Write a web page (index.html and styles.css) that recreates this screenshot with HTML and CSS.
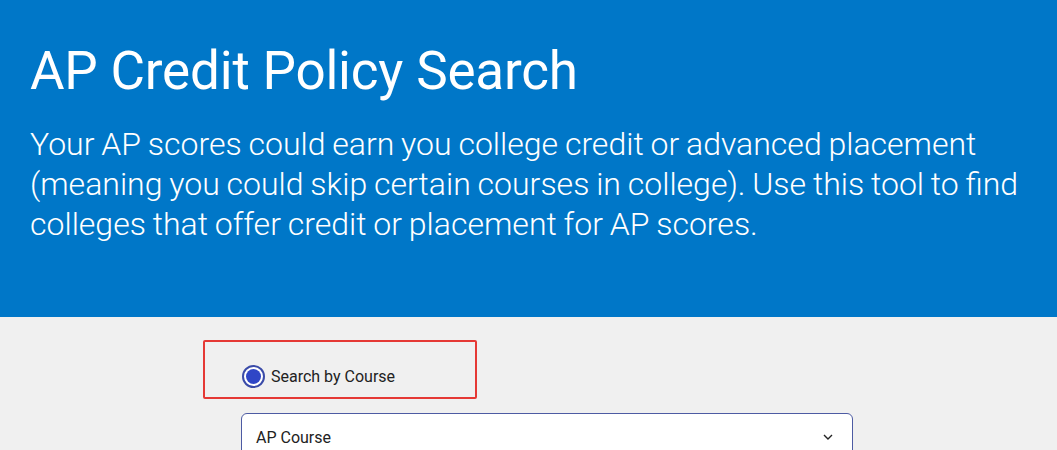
FILE: index.html
```
<!DOCTYPE html>
<html>
<head>
<meta charset="utf-8">
<link rel="stylesheet" href="styles.css">
</head>
<body>
<header class="hero">
  <h1 class="hero-title">AP Credit Policy Search</h1>
  <p class="hero-text">Your AP scores could earn you college credit or advanced placement (meaning you could skip certain courses in college). Use this tool to find colleges that offer credit or placement for AP scores.</p>
</header>
<main class="search">
  <div class="search-inner">
    <div class="highlight">
      <label class="radio-row">
        <span class="radio"><span class="radio-dot"></span></span>
        <span class="radio-label">Search by Course</span>
      </label>
    </div>
    <div class="select">
      <span class="select-text">AP Course</span>
      <svg class="chevron" width="10" height="6" viewBox="0 0 10 6"><path d="M1 1l4 4 4-4" fill="none" stroke="#222" stroke-width="1.4"/></svg>
    </div>
  </div>
</main>
</body>
</html>
```
FILE: styles.css
```
* { box-sizing: border-box; }
html, body { margin: 0; padding: 0; }
body { font-family: Roboto, "Noto Sans", sans-serif; background: #f0f0f0; height: 450px; overflow: hidden; }
.hero { background: #0077c8; color: #fff; height: 317px; padding: 40px 14px 0 30px; }
.hero-title { margin: 0; font-size: 53px; font-weight: 400; line-height: 62px; letter-spacing: -0.2px; }
.hero-text { margin: 22px 0 0 0; font-size: 32px; font-weight: 300; line-height: 40px; word-spacing: -1px; }
.search { padding: 23px 0 0 203px; }
.highlight { width: 274px; height: 59px; border: 2px solid #e53935; border-radius: 2px; padding: 23px 0 0 37px; }
.radio-row { display: flex; align-items: center; gap: 6px; }
.radio { width: 23px; height: 23px; border: 2px solid #3a4ba8; border-radius: 50%; display: flex; align-items: center; justify-content: center; background: #fff; }
.radio-dot { width: 15px; height: 15px; border-radius: 50%; background: #2f46c6; }
.radio-label { font-size: 16px; color: #222; }
.select { margin: 14px 0 0 38px; width: 612px; height: 48px; background: #fff; border: 1.5px solid #4d5ba3; border-radius: 6px; display: flex; align-items: center; justify-content: space-between; padding: 0 19px 0 14px; }
.select-text { font-size: 16px; color: #222; }
.chevron { display: block; }
```
